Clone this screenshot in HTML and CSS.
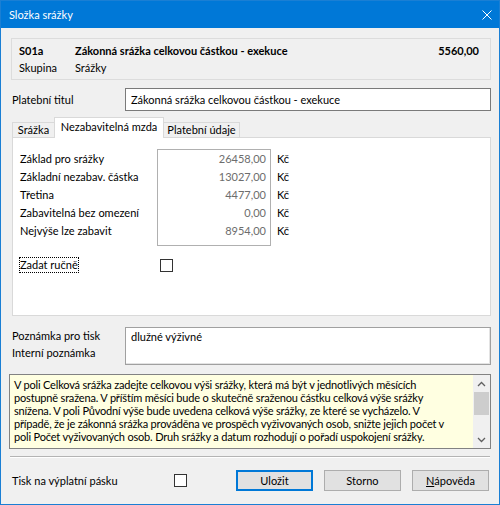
FILE: index.html
```html
<!DOCTYPE html>
<html>
<head>
    <meta charset="utf-8">
    <title>Složka srážky</title>
    <link rel="stylesheet" href="styles.css">
</head>
<body>
    <div class="window">
        <div class="titlebar">
            <span>Složka srážky</span>
            <svg class="close" width="10" height="10" viewBox="0 0 10 10">
                <path d="M0.5 0.5 L9.5 9.5 M9.5 0.5 L0.5 9.5" stroke="#fff" stroke-width="1" fill="none"/>
            </svg>
        </div>

        <div class="content">
            <div class="head">
                <b>S01a</b>
                <b>Zákonná srážka celkovou částkou - exekuce</b>
                <b class="amount">5560,00</b>
                <span>Skupina</span>
                <span>Srážky</span>
            </div>

            <div class="field-row">
                <label class="field-label">Platební titul</label>
                <div class="input">Zákonná srážka celkovou částkou - exekuce</div>
            </div>

            <div class="tabs">
                <div class="tab tab-first">Srážka</div>
                <div class="tab active">Nezabavitelná mzda</div>
                <div class="tab tab-last">Platební údaje</div>
            </div>
            <div class="panel">
                <div class="amounts">
                    <div class="col-labels">
                        <div>Základ pro srážky</div>
                        <div>Základní nezabav. částka</div>
                        <div>Třetina</div>
                        <div>Zabavitelná bez omezení</div>
                        <div>Nejvýše lze zabavit</div>
                    </div>
                    <div class="valbox">
                        <div>26458,00</div>
                        <div>13027,00</div>
                        <div>4477,00</div>
                        <div>0,00</div>
                        <div>8954,00</div>
                    </div>
                    <div class="col-units">
                        <div>Kč</div>
                        <div>Kč</div>
                        <div>Kč</div>
                        <div>Kč</div>
                        <div>Kč</div>
                    </div>
                </div>
                <div class="manual">
                    <span class="focus">Zadat ručně</span>
                    <span class="check"></span>
                </div>
            </div>

            <div class="notes">
                <div class="notes-labels">
                    <div>Poznámka pro tisk</div>
                    <div>Interní poznámka</div>
                </div>
                <div class="textarea">dlužné výživné</div>
            </div>

            <div class="hint">
                <div class="hint-text">V poli Celková srážka zadejte celkovou výši srážky, která má být v jednotlivých měsících<br>postupně sražena. V příštím měsíci bude o skutečně sraženou částku celková výše srážky<br>snížena. V poli Původní výše bude uvedena celková výše srážky, ze které se vycházelo. V<br>případě, že je zákonná srážka prováděna ve prospěch vyživovaných osob, snižte jejich počet v<br>poli Počet vyživovaných osob. Druh srážky a datum rozhodují o pořadí uspokojení srážky.</div>
                <div class="scrollbar">
                    <div class="arrow">
                        <svg width="9" height="6" viewBox="0 0 9 6"><path d="M1 5 L4.5 1.5 L8 5" stroke="#606060" stroke-width="1.3" fill="none"/></svg>
                    </div>
                    <div class="thumb"></div>
                    <div class="track"></div>
                    <div class="arrow">
                        <svg width="9" height="6" viewBox="0 0 9 6"><path d="M1 1 L4.5 4.5 L8 1" stroke="#606060" stroke-width="1.3" fill="none"/></svg>
                    </div>
                </div>
            </div>

            <div class="separator"></div>

            <div class="footer">
                <span class="footer-label">Tisk na výplatní pásku</span>
                <span class="check"></span>
                <button class="btn default">Uložit</button>
                <button class="btn">Storno</button>
                <button class="btn"><u>N</u>ápověda</button>
            </div>
        </div>
    </div>
</body>
</html>
```

FILE: styles.css
```css
* { box-sizing: border-box; }
body { margin: 0; font-family: Lato, "Noto Sans", sans-serif; font-size: 11px; color: #000; }

.window { width: 500px; height: 505px; border: 1px solid #1a7fd4; background: #f0f0f0; }
.titlebar { height: 27px; background: #0078d7; color: #fff; font-size: 11px; display: flex; align-items: center; justify-content: space-between; padding: 0 7px 0 8px; }

.content { padding: 10px 8px 0 10px; }

.head { height: 42px; border: 1px solid #dcdcdc; padding: 3px 11px 0 7px; display: grid; grid-template-columns: 56px 1fr auto; grid-auto-rows: 17px; align-items: center; }
.head .amount { text-align: right; }

.field-row { margin-top: 8px; display: grid; grid-template-columns: 114px 1fr; }
.field-label { padding-left: 1px; line-height: 23px; }
.input { height: 23px; border: 1px solid #7a7a7a; background: #fff; padding: 0 5px; line-height: 21px; }

.tabs { margin-top: 6px; height: 21px; margin-bottom: -1px; padding-left: 1px; display: flex; align-items: flex-end; }
.tab { position: relative; height: 15px; margin-bottom: 1px; border: 1px solid #d9d9d9; border-bottom: none; background: #f0f0f0; text-align: center; line-height: 14px; }
.tab-first { width: 42px; border-right: none; }
.tab-last { width: 76px; border-left: none; }
.tab.active { z-index: 1; width: 110px; height: 21px; margin-bottom: 0; background: #fff; line-height: 18px; }

.panel { margin-left: 1px; height: 179px; background: #fff; border: 1px solid #d9d9d9; padding: 11px 7px 0 7px; }
.amounts { display: grid; grid-template-columns: 137px 114px auto; line-height: 18px; }
.col-labels, .col-units { padding-top: 1px; }
.col-units { padding-left: 6px; }
.valbox { height: 97px; border: 1px solid #b0b0b0; padding-right: 4px; text-align: right; color: #6d6d6d; }

.manual { margin: 11px 0 0 -1px; display: grid; grid-template-columns: 141px 13px; align-items: center; }
.focus { justify-self: start; border: 1px dotted #000; line-height: 14px; }
.check { display: inline-block; width: 13px; height: 13px; border: 1px solid #333; background: #fff; }

.notes { margin-top: 11px; display: grid; grid-template-columns: 114px 1fr; }
.notes-labels { padding-left: 1px; line-height: 17px; }
.textarea { height: 38px; border: 1px solid #a0a0a0; box-shadow: inset -1px -1px 0 #e3e3e3; background: #fff; padding: 1px 5px; line-height: 16px; }

.hint { margin: 9px 0 0 -2px; height: 75px; border: 1px solid #828282; background: #ffffe1; display: flex; }
.hint-text { flex: 1; padding: 3px 4px; line-height: 13px; letter-spacing: -0.18px; white-space: nowrap; overflow: hidden; }
.scrollbar { width: 17px; background: #f0f0f0; display: flex; flex-direction: column; }
.arrow { height: 17px; display: flex; align-items: center; justify-content: center; }
.thumb { height: 23px; margin: 0 1px; background: #cdcdcd; }
.track { flex: 1; }

.separator { margin: 7px 1px 0 -1px; height: 2px; border-top: 1px solid #b4b4b4; border-bottom: 1px solid #fff; }

.footer { margin-top: 12px; display: flex; align-items: center; }
.footer-label { width: 163px; padding-left: 1px; }
.btn { width: 77px; height: 21px; margin-left: 11px; border: 1px solid #adadad; background: #e1e1e1; font: inherit; color: #000; padding: 0; }
.btn.default { margin-left: auto; border-color: #0078d7; box-shadow: inset 0 0 0 1px #0078d7; }
.footer .btn:last-child { margin-right: 2px; }
```
